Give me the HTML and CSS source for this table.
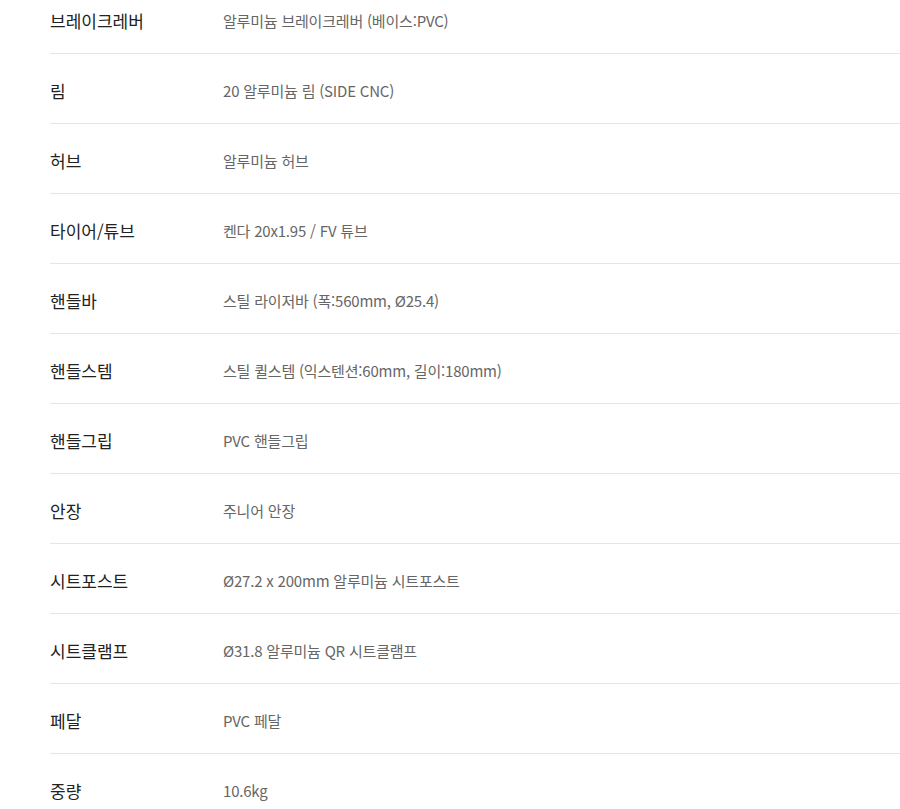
FILE: index.html
```html
<!DOCTYPE html>
<html lang="ko">
<head>
<meta charset="utf-8">
<link rel="stylesheet" href="styles.css">
</head>
<body>
<div class="spec">
  <div class="row"><div class="label">브레이크레버</div><div class="value">알루미늄 브레이크레버 (베이스:PVC)</div></div>
  <div class="row"><div class="label">림</div><div class="value">20 알루미늄 림 (SIDE CNC)</div></div>
  <div class="row"><div class="label">허브</div><div class="value">알루미늄 허브</div></div>
  <div class="row"><div class="label">타이어/튜브</div><div class="value">켄다 20x1.95 / FV 튜브</div></div>
  <div class="row"><div class="label">핸들바</div><div class="value">스틸 라이저바 (폭:560mm, Ø25.4)</div></div>
  <div class="row"><div class="label">핸들스템</div><div class="value">스틸 퀼스템 (익스텐션:60mm, 길이:180mm)</div></div>
  <div class="row"><div class="label">핸들그립</div><div class="value">PVC 핸들그립</div></div>
  <div class="row"><div class="label">안장</div><div class="value">주니어 안장</div></div>
  <div class="row"><div class="label">시트포스트</div><div class="value">Ø27.2 x 200mm 알루미늄 시트포스트</div></div>
  <div class="row"><div class="label">시트클램프</div><div class="value">Ø31.8 알루미늄 QR 시트클램프</div></div>
  <div class="row"><div class="label">페달</div><div class="value">PVC 페달</div></div>
  <div class="row"><div class="label">중량</div><div class="value">10.6kg</div></div>
</div>
</body>
</html>
```
FILE: styles.css
```css
html, body {
  margin: 0;
  padding: 0;
  background: #fff;
  overflow: hidden;
}
body {
  font-family: "Noto Sans CJK KR", "Noto Sans", sans-serif;
}
.spec {
  margin: -16px 0 0 50px;
  width: 850px;
}
.row {
  display: grid;
  grid-template-columns: 173px 1fr;
  align-items: center;
  height: 69px;
  border-bottom: 1px solid #e5e5e5;
}
.label {
  font-size: 17px;
  color: #222;
  padding-top: 4px;
}
.value {
  font-size: 15px;
  color: #666;
  padding-top: 4px;
  letter-spacing: -0.2px;
}
```
